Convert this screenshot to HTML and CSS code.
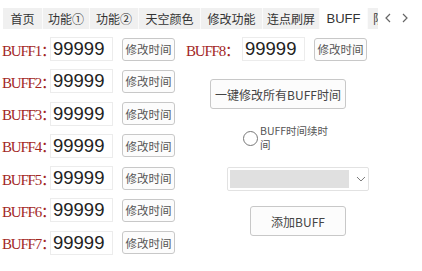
FILE: index.html
```html
<!DOCTYPE html>
<html>
  <head>
    <title>BUFF</title>
    <link rel="stylesheet" href="styles.css">
  </head>
  <body>
    <div class="tabbar">
      <div class="tabs">
        <span class="tab t1">首页</span>
        <span class="tab t2">功能①</span>
        <span class="tab t3">功能②</span>
        <span class="tab t4">天空颜色</span>
        <span class="tab t5">修改功能</span>
        <span class="tab t6">连点刷屏</span>
        <span class="tab t7 active">BUFF</span>
        <span class="tab t8">限时</span>
      </div>
      <div class="arrows">
        <svg width="8" height="10" viewBox="0 0 8 10"><path d="M6 1 L2 5 L6 9" fill="none" stroke="#666" stroke-width="1.2"/></svg>
        <svg width="8" height="10" viewBox="0 0 8 10"><path d="M2 1 L6 5 L2 9" fill="none" stroke="#666" stroke-width="1.2"/></svg>
      </div>
    </div>

    <div class="content">
      <!-- left column: BUFF1 - BUFF7 -->
      <div class="col-left">
        <div class="row"><span class="label">BUFF1：</span><input class="num" value="99999"><button class="btn">修改时间</button></div>
        <div class="row"><span class="label">BUFF2：</span><input class="num" value="99999"><button class="btn">修改时间</button></div>
        <div class="row"><span class="label">BUFF3：</span><input class="num" value="99999"><button class="btn">修改时间</button></div>
        <div class="row"><span class="label">BUFF4：</span><input class="num" value="99999"><button class="btn">修改时间</button></div>
        <div class="row"><span class="label">BUFF5：</span><input class="num" value="99999"><button class="btn">修改时间</button></div>
        <div class="row"><span class="label">BUFF6：</span><input class="num" value="99999"><button class="btn">修改时间</button></div>
        <div class="row"><span class="label">BUFF7：</span><input class="num" value="99999"><button class="btn">修改时间</button></div>
      </div>

      <!-- right column -->
      <div class="col-right">
        <div class="row"><span class="label label8">BUFF8：</span><input class="num" value="99999"><button class="btn">修改时间</button></div>
        <button class="btn big all">一键修改所有BUFF时间</button>
        <label class="radio">
          <span class="circle"></span>
          <span class="radio-text">BUFF时间续时间</span>
        </label>
        <div class="select">
          <div class="select-fill"></div>
          <svg class="chev" width="10" height="6" viewBox="0 0 10 6"><path d="M1 1 L5 5 L9 1" fill="none" stroke="#777" stroke-width="1"/></svg>
        </div>
        <button class="btn big add">添加BUFF</button>
      </div>
    </div>
  </body>
</html>
```

FILE: styles.css
```css
body {
  margin: 0;
  background: #fff;
  font-family: "Noto Sans CJK SC", "Noto Sans", sans-serif;
  width: 422px;
  height: 271px;
  overflow: hidden;
}
.tabbar {
  display: flex;
  margin-top: 8px;
  height: 21px;
}
.tabs {
  display: flex;
  width: 375px;
  padding-left: 3px;
  overflow: hidden;
  flex-shrink: 0;
}
.tab {
  flex-shrink: 0;
  background: #f0f0f0;
  border-right: 1px solid #fbfbfb;
  color: #333;
  font-size: 12px;
  line-height: 21px;
  text-align: center;
  white-space: nowrap;
}
.t1 { width: 39px; }
.t2 { width: 46px; }
.t3 { width: 48px; }
.t4 { width: 61px; }
.t5 { width: 61px; }
.t6 { width: 56px; }
.t7 { width: 47px; }
.t8 {
  padding-left: 5px;
  text-align: left;
}
.tab.active {
  background: #fff;
  font-family: "Liberation Sans", sans-serif;
  font-size: 13px;
}
.arrows {
  display: flex;
  align-items: center;
  gap: 9px;
  padding-left: 6px;
  height: 19px;
}
.content {
  display: flex;
  padding-top: 8px;
  padding-left: 2px;
}
.col-left {
  width: 184px;
}
.row {
  display: flex;
  align-items: center;
  height: 24px;
  margin-bottom: 8.3px;
}
.label {
  flex-shrink: 0;
  width: 48px;
  color: #a3271f;
  font-family: "Liberation Serif", "Noto Sans CJK SC", serif;
  font-size: 15px;
  letter-spacing: -1.2px;
  white-space: nowrap;
}
.label8 {
  width: 56px;
}
.num {
  width: 63px;
  height: 24px;
  box-sizing: border-box;
  border: 1px solid #ececec;
  padding: 0 0 0 2px;
  margin: 0;
  font-family: "Liberation Sans", sans-serif;
  font-size: 18.5px;
  color: #222;
  outline: none;
}
.btn {
  margin-left: 9px;
  width: 53px;
  height: 23px;
  padding: 0;
  box-sizing: border-box;
  border: 1px solid #c8c8c8;
  border-radius: 3px;
  background: #fcfcfc;
  color: #555;
  font-family: "Noto Sans CJK SC", sans-serif;
  font-size: 11.5px;
}
.col-right {
  display: flex;
  flex-direction: column;
  align-items: flex-start;
}
.btn.big {
  height: 30px;
  font-size: 12px;
  color: #444;
}
.all {
  width: 136px;
  margin-left: 24px;
  margin-top: 10px;
}
.radio {
  display: flex;
  margin-left: 57px;
  margin-top: 15px;
}
.circle {
  width: 13px;
  height: 13px;
  border: 1px solid #777;
  border-radius: 50%;
  margin-top: 7px;
  flex-shrink: 0;
}
.radio-text {
  width: 76px;
  margin-left: 2px;
  font-size: 10.5px;
  line-height: 14px;
  color: #555;
  word-break: break-all;
}
.select {
  display: flex;
  align-items: center;
  width: 142px;
  height: 24px;
  box-sizing: border-box;
  border: 1px solid #e2e2e2;
  border-radius: 2px;
  margin-left: 41px;
  margin-top: 15px;
  padding: 2px;
}
.select-fill {
  width: 120px;
  height: 100%;
  background: #e0e0e0;
}
.chev {
  margin-left: 7px;
}
.add {
  width: 96px;
  margin-left: 64px;
  margin-top: 15px;
}
```
